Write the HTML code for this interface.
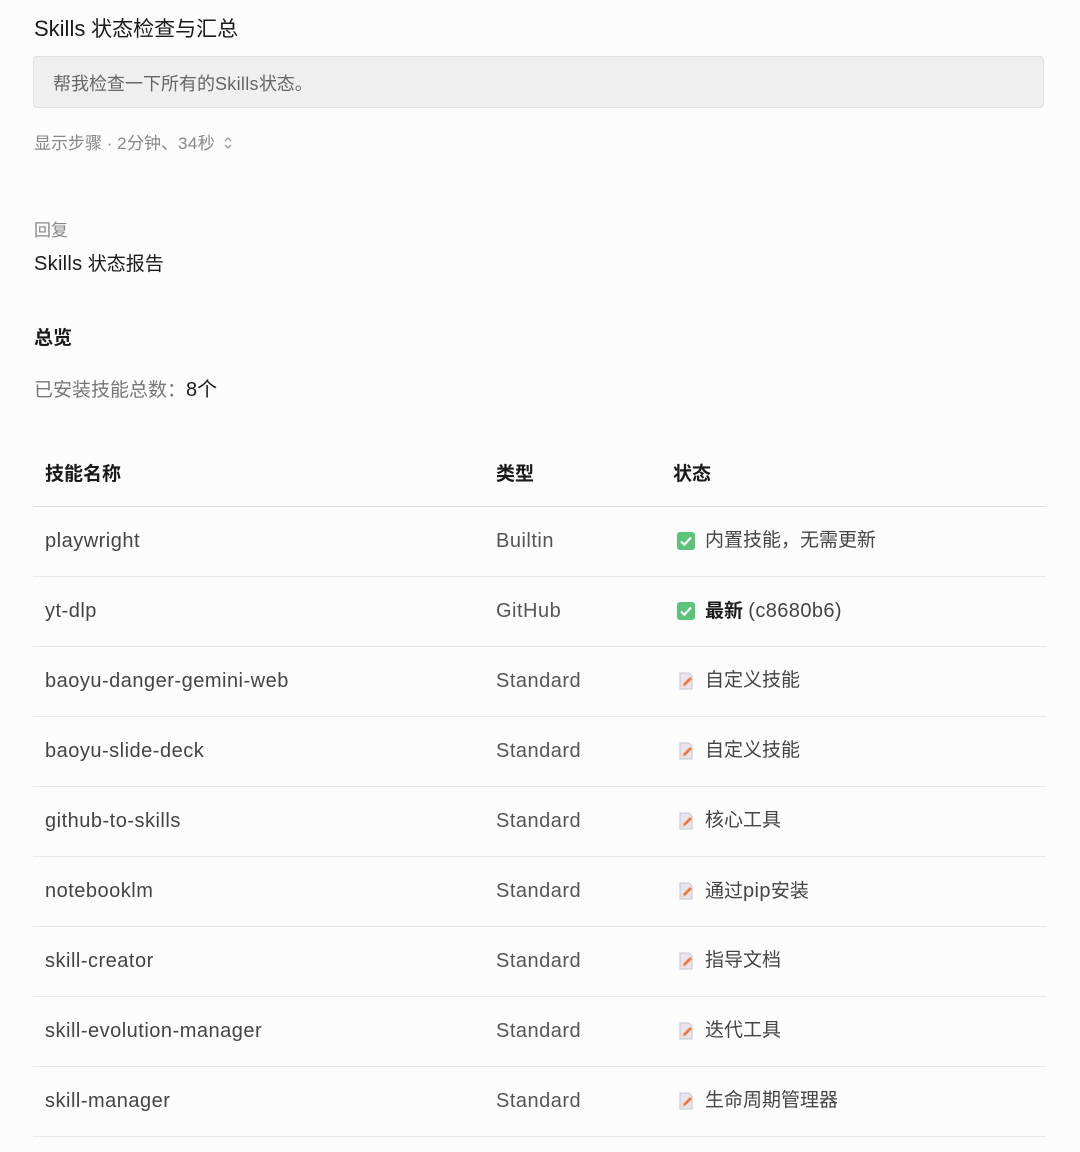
<!DOCTYPE html>
<html><head><meta charset="utf-8"><style>
body{margin:0;width:1080px;height:1152px;background:#fcfcfc;font-family:"Liberation Sans","Noto Sans CJK SC",sans-serif;color:#222;position:relative;overflow:hidden}
.a{position:absolute;white-space:nowrap}
.box{position:absolute;left:33px;top:56px;width:1011px;height:52px;background:#efefef;border:1px solid #e0e0e0;border-radius:4px;box-sizing:border-box}
.line{position:absolute;left:33px;width:1013px;height:1px;background:#e8e8e8}
.r{line-height:30px;height:30px}
.c1{left:45px;color:#444;font-size:20px;letter-spacing:0.5px}
.c2{left:496px;color:#555;font-size:20px;letter-spacing:0.5px}
.c3{left:705px;color:#444;font-size:19px}
.c3 i{font-style:normal;font-size:20px;letter-spacing:0.4px}
.ic{position:absolute;left:676px;width:20px;height:20px}
</style></head><body>
<div class="a" style="left:34px;top:13px;font-size:21px;color:#1a1a1a"><span style="font-size:22px">Skills</span> 状态检查与汇总</div>
<div class="box"></div>
<div class="a" style="left:53px;top:70px;font-size:18px;color:#666">帮我检查一下所有的<span style="letter-spacing:0.3px">Skills</span>状态。</div>
<div class="a" style="left:34px;top:129px;font-size:17px;color:#888">显示步骤 · <span style="letter-spacing:0.4px">2</span>分钟、<span style="letter-spacing:0.4px">34</span>秒 <svg width="10" height="14" viewBox="0 0 10 14" style="vertical-align:-1px;margin-left:4px"><path d="M2 5l3-3 3 3M2 9l3 3 3-3" stroke="#999" stroke-width="1.3" fill="none"/></svg></div>
<div class="a" style="left:34px;top:216px;font-size:17px;color:#888">回复</div>
<div class="a" style="left:34px;top:249px;font-size:19px;color:#1a1a1a"><span style="font-size:20px;letter-spacing:0.3px">Skills</span> 状态报告</div>
<div class="a" style="left:34px;top:323px;font-size:19px;color:#1a1a1a;font-weight:bold">总览</div>
<div class="a" style="left:34px;top:373px;font-size:19px;color:#777">已安装技能总数：<span style="color:#1a1a1a;font-size:20px">8个</span></div>
<div class="a" style="left:45px;top:459px;font-size:19px;font-weight:bold;color:#1a1a1a">技能名称</div>
<div class="a" style="left:496px;top:459px;font-size:19px;font-weight:bold;color:#1a1a1a">类型</div>
<div class="a" style="left:673px;top:459px;font-size:19px;font-weight:bold;color:#1a1a1a">状态</div>
<div class="line" style="top:506px;background:#ddd"></div>
<div id="rows"></div>
<script>
var d=[["playwright","Builtin","内置技能，无需更新",1],["yt-dlp","GitHub","<b style='color:#1a1a1a'>最新</b> <i>(c8680b6)</i>",1],["baoyu-danger-gemini-web","Standard","自定义技能",0],["baoyu-slide-deck","Standard","自定义技能",0],["github-to-skills","Standard","核心工具",0],["notebooklm","Standard","通过<i>pip</i>安装",0],["skill-creator","Standard","指导文档",0],["skill-evolution-manager","Standard","迭代工具",0],["skill-manager","Standard","生命周期管理器",0]];
var h="";
var chk='<svg viewBox="0 0 20 20"><rect x="1" y="1" width="18" height="18" rx="3" fill="#5cc47a"/><path d="M5 10.5l3.3 3.2L15 6.5" stroke="#fff" stroke-width="2.2" fill="none"/></svg>';
var pen='<svg viewBox="0 0 20 20"><path d="M4 2h9l3 3v13H4z" fill="#e8e4ee" stroke="#c9c4d2"/><path d="M6 16l1-3 7-7 2 2-7 7z" fill="#f07a3c"/><path d="M6 16l1-3 2 2z" fill="#f4c9a0"/></svg>';
d.forEach(function(r,i){var y=506+i*70;var t=y+20;
h+='<div class="a r c1" style="top:'+t+'px">'+r[0]+'</div><div class="a r c2" style="top:'+t+'px">'+r[1]+'</div><div class="ic" style="top:'+(y+25)+'px">'+(r[3]?chk:pen)+'</div><div class="a r c3" style="top:'+t+'px">'+r[2]+'</div><div class="line" style="top:'+(y+70)+'px"></div>';});
document.getElementById("rows").innerHTML=h;
</script>
</body></html>
